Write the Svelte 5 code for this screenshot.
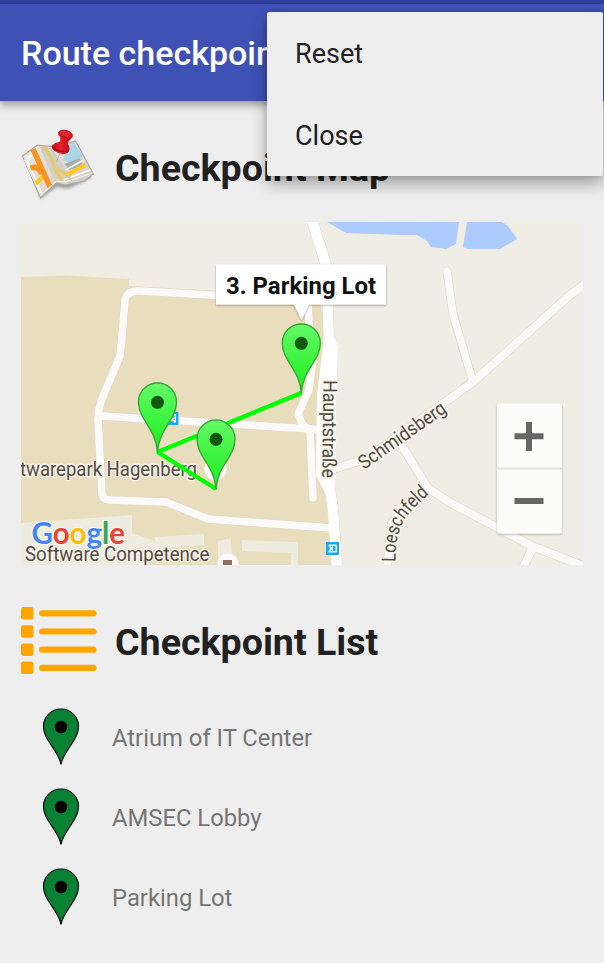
<script>
  const menu = ['Reset', 'Close'];
  const checkpoints = ['Atrium of IT Center', 'AMSEC Lobby', 'Parking Lot'];
  const markers = [
    { x: 157.5, y: 452 },
    { x: 216, y: 489 },
    { x: 301.3, y: 393 }
  ];
</script>

<main class="screen">
  <div class="status"></div>
  <header class="appbar"><h1>Route checkpoints</h1></header>

  <div class="content">
    <section class="heading first">
      <svg width="76" height="76" viewBox="21.500 126 76 76" aria-hidden="true">
        <defs>
          <linearGradient id="fold" x1="0" y1="0" x2="1" y2="1">
            <stop offset="0" stop-color="#efece6" /><stop offset="1" stop-color="#cfc9bf" />
          </linearGradient>
          <linearGradient id="pinred" x1="0" y1="0" x2="1" y2="0">
            <stop offset="0" stop-color="#c5131f" /><stop offset=".45" stop-color="#e8202b" /><stop offset="1" stop-color="#a90913" />
          </linearGradient>
          <filter id="soft" x="-20%" y="-20%" width="140%" height="140%"><feGaussianBlur stdDeviation="1.5" /></filter>
          <clipPath id="paper"><path d="M23 156L38 145L58 147L76 141L94 174L85 181L66 185L57 183L41 198Z" /></clipPath>
        </defs>
        <path d="M29 160L41 199L57 187L68 189L92 178L85 168Z" fill="#555" opacity=".5" filter="url(#soft)" />
        <path d="M23 156L38 145L58 147L76 141L94 174L85 181L66 185L57 183L41 198Z" fill="url(#fold)" />
        <g clip-path="url(#paper)">
          <path d="M39 145L50 145L76 183L56 183Z" fill="#d5d0c5" />
          <path d="M63 160L73 141L84 156L71 163Z" fill="#a9d5e5" />
          <path d="M65 164l15-6 4 7-14 5z" fill="#a5ada9" />
          <path d="M66 170L84 160M64 180L93 169M28 161L42 193M27 159L37 152" stroke="#fff" stroke-width="1.800" fill="none" />
          <path d="M43 147Q53 154 55 169L63 181M57 169L71 177" stroke="#dfcb78" stroke-width="3.500" fill="none" />
          <path d="M68 174.500L86 164.500" stroke="#ffc91e" stroke-width="4" />
          <path d="M36 184L44 176" stroke="#ffc91e" stroke-width="4.500" />
          <path d="M33.500 149L50.500 187M31 168Q39 165 42 174" stroke="#f7941e" stroke-width="5.500" fill="none" />
        </g>
        <path d="M23 156L38 145L58 147L76 141L94 174L85 181L66 185L57 183L41 198Z" fill="none" stroke="#aaa69d" stroke-width="1.100" />
        <path d="M25 160L41 195L57 181L66 182L93 173" fill="none" stroke="#f7f5ef" stroke-width="1" />
        <path d="M60 154L57 162" stroke="#aaa" stroke-width="1" />
        <path d="M59 132L73 136Q70 141 68 143Q72 149 68 153Q62 156 55 151Q51 148 53 145Q56 142 60 142Q62 138 59 132Z" fill="url(#pinred)" />
        <ellipse cx="66" cy="134.500" rx="7.600" ry="4.600" fill="#cf121e" transform="rotate(14 66 134.500)" />
        <ellipse cx="65.500" cy="133.400" rx="5.500" ry="2.600" fill="#e02a32" transform="rotate(14 65.500 133.400)" />
        <path d="M53 147Q59 153 69 151" stroke="#a70f19" stroke-width="1.500" fill="none" />
      </svg>
      <h2>Checkpoint Map</h2>
    </section>

    <svg class="map" width="562" height="343" viewBox="21 222 562 343">
      <defs>
        <linearGradient id="lime" x1="0" y1="0" x2="0" y2="1">
          <stop offset="0" stop-color="#65fa68" /><stop offset="1" stop-color="#19ef19" />
        </linearGradient>
        <filter id="drop" x="-10%" y="-20%" width="120%" height="150%">
          <feDropShadow dx="0" dy="1" stdDeviation="1" flood-color="#000" flood-opacity=".35" />
        </filter>
      </defs>
      <rect x="21" y="222" width="562" height="343" fill="#f0ede5" />
      <path d="M21 277L66 275.500L129 279V286L318 296L331 345L322 470L334 565H21Z" fill="#e8ddbd" />
      <path d="M21 523L132 515V533L155 541V537L204 534V545L160 548L145 565H21Z" fill="#eeecdf" />
      <path d="M218 541L231 538L233 565H218ZM242 540L298 542V565H291V553L242 551Z" fill="#eeecdf" />
      <path d="M327 222L346 233L400 235L417 235L427 241L431 247L446 249L456 244L459 222Z" fill="#accbff" />
      <path d="M467 222H502L508 226L517 239L500 249H468L463 247Z" fill="#accbff" />

      <g fill="none" stroke-linejoin="round" stroke-linecap="round">
        {#each [{ c: '#ded8ca', e: 1.2 }, { c: '#fbfaf8', e: 0 }] as layer}
          <g stroke={layer.c}>
            <g stroke-width={7.5 + layer.e}>
              <path d="M312 299L210 295L140 291Q128 290 125 299L123 325L120 356L101 401Q98 410 98 420L102 494Q103 500 109 500L166 502L208 519L331 528" />
              <path d="M101 416L311 429L326 431" />
              <path d="M308 300L309 325L313 360L309 390L298 414L302 424L310 430L313 498" />
              <path d="M447 271L453 314L473 382" />
            </g>
            <g stroke-width={8 + layer.e}>
              <path d="M588 282L570 295L473 382L405 431L366 459L333 469" />
              <path d="M399 441L428 488L449 502L532 546L588 568" />
              <path d="M532 549L523 568M425 490L392 523L387 568" />
            </g>
            <path d="M312 220L326 265L329 340L327 470L333 510L337 568" stroke-width={10 + layer.e} />
          </g>
        {/each}
      </g>
      <path d="M312 220L326 265L329 340L327 470L333 510L337 568" fill="none" stroke="#fff" stroke-width="10" />
      <path d="M324 337H334L338 347L336 395L336 475L333 493H325L316 475L317 395Z" fill="#fff" />
      <circle cx="215.500" cy="469" r="11" fill="#fff" />
      <circle cx="228" cy="564" r="10.500" fill="#fff" />
      <path d="M223 560h9v5h-9z" fill="#8d6e63" />
      {#each [{ x: 172, y: 418.5, turn: 0 }, { x: 332.5, y: 548.5, turn: 90 }] as stop}
        <g transform="translate({stop.x} {stop.y}) rotate({stop.turn})">
          <rect x="-6.500" y="-6.500" width="13" height="13" rx="1" fill="#12aaf5" />
          <path d="M-4-3.500Q-4-4.500-3-4.500H3Q4-4.500 4-3.500V4H2V2.800H-2V4H-4Z" fill="#fff" />
          <path d="M-2.500-3h5v2.500h-5zM-2.800.500h1.400v1.200h-1.400zM1.400.500h1.400v1.200H1.400z" fill="#12aaf5" />
        </g>
      {/each}

      <g class="label">
        <text x="20" y="476" textLength="177" lengthAdjust="spacingAndGlyphs">twarepark Hagenberg</text>
        <text x="25" y="561" textLength="184.500" lengthAdjust="spacingAndGlyphs">Software Competence</text>
        <text transform="translate(323.500 380) rotate(90.800)" textLength="98" lengthAdjust="spacingAndGlyphs">Hauptstraße</text>
        <text transform="translate(364 470) rotate(-35)" textLength="102" lengthAdjust="spacingAndGlyphs">Schmidsberg</text>
        <path id="lane" d="M395.500 562Q395 530 408 515T432 492" fill="none" stroke="none" />
        <text><textPath href="#lane" textLength="79" lengthAdjust="spacingAndGlyphs">Loeschfeld</textPath></text>
      </g>

      <path d="M301.300 393L157.500 452L216 489" fill="none" stroke="#0f0" stroke-width="4.300" stroke-linejoin="bevel" />
      {#each markers as m}
        <g transform="translate({m.x} {m.y})">
          <path d="M0 0C-1.500-24-19-32-19-50A19 19 0 0 1 19-50C19-32 1.500-24 0 0Z" fill="url(#lime)" stroke="#35a735" stroke-width="1.400" stroke-linejoin="round" />
          <circle cy="-49.700" r="6.500" fill="#11580f" />
        </g>
      {/each}

      <g filter="url(#drop)">
        <path d="M216 264.500H386V304.500H309L301.500 320L294 304.500H216Z" fill="#fff" />
      </g>
      <text class="callout" x="226" y="293.500" textLength="150" lengthAdjust="spacingAndGlyphs">3. Parking Lot</text>

      <text class="google" x="31.500" y="543.700" textLength="93.500" lengthAdjust="spacingAndGlyphs"><tspan fill="#4285f4">G</tspan><tspan fill="#ea4335">o</tspan><tspan fill="#fbbc05">o</tspan><tspan fill="#4285f4">g</tspan><tspan fill="#34a853">l</tspan><tspan fill="#ea4335">e</tspan></text>

      <g filter="url(#drop)" opacity=".84">
        <rect x="497" y="403.500" width="65" height="130" rx="2" fill="#fff" />
      </g>
      <path d="M497 468.500H562" stroke="#e2e1de" stroke-width="2" />
      <path d="M514.500 436.200H543.500M529 422V451M514.500 501H543.500" stroke="#666" stroke-width="6" />
    </svg>

    <section class="heading second">
      <svg width="76" height="68" viewBox="0.500 0 76 68" fill="#ffa500" aria-hidden="true">
        {#each [0, 18.2, 36.4, 54.6] as y}
          <rect x="0.500" {y} width="12.500" height="12.500" rx="2.500" />
          <rect x="18.500" y={y + 3.2} width="57.500" height="6.200" rx="3.100" />
        {/each}
      </svg>
      <h2>Checkpoint List</h2>
    </section>

    <ul>
      {#each checkpoints as name}
        <li>
          <svg width="38" height="58" viewBox="-19 -51.500 38 58" aria-hidden="true">
            <path d="M0 5C-2-9-17.500-19-17.500-33A17.500 17.500 0 0 1 17.500-33C17.500-19 2-9 0 5Z" fill="#0a8133" stroke="#080808" stroke-width="1.200" />
            <circle cy="-32.500" r="6.200" />
          </svg>
          <span>{name}</span>
        </li>
      {/each}
    </ul>
  </div>

  <nav class="menu">
    {#each menu as item}
      <button>{item}</button>
    {/each}
  </nav>
</main>

<style>
  :global(body) { margin: 0; background: #eee; }
  .screen {
    position: relative;
    width: 604px;
    height: 963px;
    overflow: hidden;
    background: #eee;
    font-family: Roboto, 'Liberation Sans', sans-serif;
  }
  .status { height: 4px; background: #303f9f; }
  .appbar {
    display: flex;
    align-items: center;
    height: 97px;
    padding-left: 21px;
    background: #3f51b5;
    box-shadow: 0 4px 8px rgba(0, 0, 0, .36);
  }
  h1, h2 { margin: 0; white-space: nowrap; }
  h1 { color: #fff; font-size: 34px; font-weight: 500; line-height: 40px; }
  .content { padding: 0 21px; }
  .heading { display: flex; align-items: center; gap: 18px; }
  .first { height: 121px; }
  .first svg { margin-top: 5px; }
  .first h2 { padding-top: 13px; }
  .second { height: 152px; }
  .second h2 { padding-top: 2px; }
  h2 { color: #212121; font-size: 37.6px; font-weight: 700; line-height: 44px; }
  .map { display: block; }
  .label text {
    font-size: 19.5px;
    fill: #504b46;
    stroke: #f8f4e8;
    stroke-width: 3px;
    stroke-linejoin: round;
    paint-order: stroke;
  }
  .callout { font-size: 23.5px; font-weight: 700; fill: #111; }
  .google {
    font-family: Lato, sans-serif;
    font-size: 31px;
    font-weight: 700;
    stroke: #faf8f2;
    stroke-width: 2px;
    paint-order: stroke;
  }
  ul { margin: -20px 0 0; padding: 0 0 0 21px; list-style: none; }
  li { display: flex; align-items: center; gap: 32px; height: 80px; color: #757575; font-size: 23.8px; }
  li span { padding-top: 2px; }
  .menu {
    position: absolute;
    top: 12px;
    left: 267px;
    width: 336px;
    height: 164px;
    border-radius: 2px;
    background: #eee;
    box-shadow: 0 8px 16px rgba(0, 0, 0, .32), 0 0 5px rgba(0, 0, 0, .15);
  }
  .menu button {
    display: flex;
    align-items: center;
    width: 100%;
    height: 82px;
    padding: 2px 28px 0;
    border: 0;
    background: none;
    color: #212121;
    font: 400 27px Roboto, 'Liberation Sans', sans-serif;
  }
</style>
